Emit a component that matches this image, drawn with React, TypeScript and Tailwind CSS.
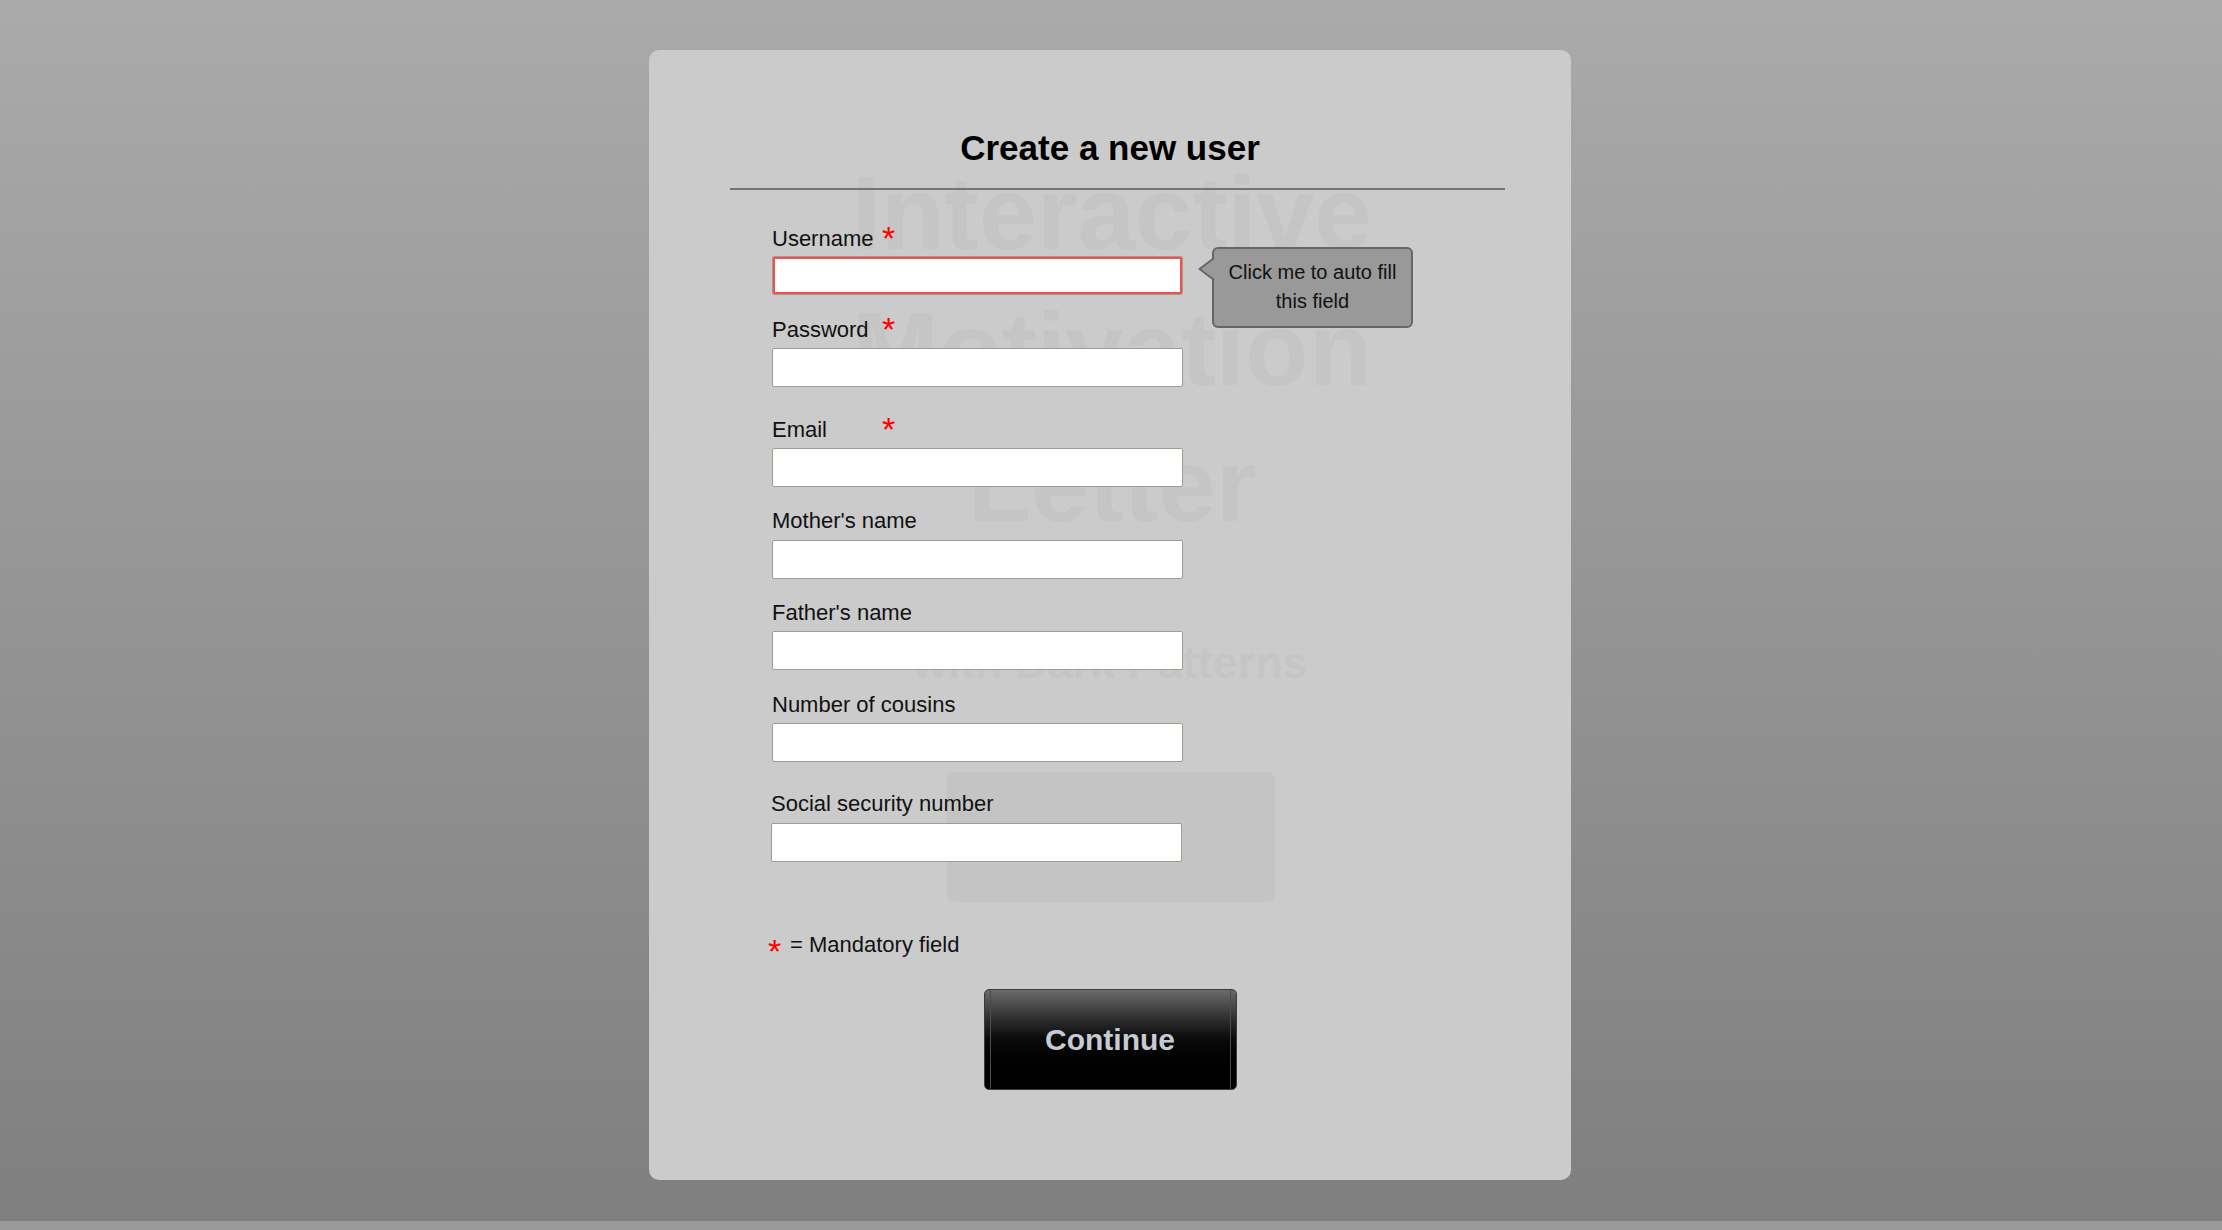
import React from "react";

type Field = {
  label: string;
  required?: boolean;
  fieldMt: string;
  inputMt: string;
  focused?: boolean;
  shift?: string;
};

const fields: Field[] = [
  { label: "Username", required: true, fieldMt: "mt-[36px]", inputMt: "mt-[4px]", focused: true },
  { label: "Password", required: true, fieldMt: "mt-[22px]", inputMt: "mt-[5px]" },
  { label: "Email", required: true, fieldMt: "mt-[30px]", inputMt: "mt-[5px]" },
  { label: "Mother's name", fieldMt: "mt-[21px]", inputMt: "mt-[6px]" },
  { label: "Father's name", fieldMt: "mt-[21px]", inputMt: "mt-[5px]" },
  { label: "Number of cousins", fieldMt: "mt-[22px]", inputMt: "mt-[5px]" },
  { label: "Social security number", fieldMt: "mt-[29px]", inputMt: "mt-[6px]", shift: "-ml-px" },
];

function Tooltip() {
  return (
    <div className="absolute left-[563px] top-[197px] z-20 h-[81px] w-[201px] rounded-[6px] border-2 border-[#666666] bg-[#999999] pt-[9px] text-center text-[20px] leading-[29px] text-[#111111]">
      <svg
        className="absolute left-[-16px] top-[8px]"
        width="18"
        height="24"
        viewBox="0 0 18 24"
      >
        <polygon points="18,1 1,12 18,23" fill="#999999" />
        <polyline points="16,1 1.5,12 16,23" fill="none" stroke="#666666" strokeWidth="2" />
      </svg>
      Click me to auto fill
      <br />
      this field
    </div>
  );
}

function Watermark() {
  return (
    <div className="pointer-events-none absolute inset-0 z-0 select-none">
      <div className="absolute left-0 right-0 top-[95px] pl-[4px] text-center text-[104px] font-bold leading-[136px] text-[#c5c5c5]">
        Interactive
        <br />
        Motivation
        <br />
        Letter
      </div>
      <div className="absolute left-0 right-0 top-[585px] text-center text-[45px] font-bold leading-[56px] text-[#c5c5c5]">
        with Dark Patterns
      </div>
      <div className="absolute left-[298px] top-[722px] h-[130px] w-[328px] rounded-[8px] bg-[#c4c4c4]" />
    </div>
  );
}

export default function App() {
  return (
    <div
      className="min-h-[1230px] w-full bg-[#999999]"
      style={{ fontFamily: '"Liberation Sans", Arial, sans-serif' }}
    >
      <div className="h-[1221px] w-full bg-gradient-to-b from-[#aaaaaa] to-[#7f7f7f] pt-[50px]">
        <div className="relative ml-[649px] h-[1130px] w-[922px] rounded-[10px] bg-[#cbcbcb]">
          <Watermark />
          <Tooltip />
          <div className="relative z-10 flex flex-col pt-[80px]">
            <h1 className="text-center text-[35px] font-bold leading-[36px] text-black">
              Create a new user
            </h1>
            <div className="ml-[81px] mr-[66px] mt-[22px] h-[2px] bg-[#747474]" />

            <div className="ml-[123px] flex flex-col">
              {fields.map((f) => (
                <div key={f.label} className={`${f.fieldMt} ${f.shift ?? ""} flex flex-col`}>
                  <div className="flex h-[26px] items-start">
                    <span className="w-[110px] whitespace-nowrap text-[22px] leading-[26px] text-[#111111]">
                      {f.label}
                    </span>
                    {f.required && (
                      <span className="-mt-[5px] text-[34px] leading-[34px] text-[#ff0000]">*</span>
                    )}
                  </div>
                  <input
                    type="text"
                    className={`${f.inputMt} h-[39px] w-[411px] rounded-[2px] border border-[#a39b8e] bg-white outline-none ${
                      f.focused ? "shadow-[inset_0_0_0_2px_#f24f4f]" : ""
                    }`}
                  />
                </div>
              ))}
            </div>

            <div className="ml-[119px] mt-[70px] flex h-[26px] items-start">
              <span className="mt-[2px] w-[22px] text-[34px] leading-[34px] text-[#ff0000]">*</span>
              <span className="text-[22px] leading-[26px] text-[#111111]">= Mandatory field</span>
            </div>

            <button
              type="button"
              className="mx-auto mt-[31px] h-[101px] w-[253px] rounded-[5px] border border-[#3c3c3c] bg-gradient-to-b from-[#6b6b6b] via-[#0a0a0a] via-50% to-black p-0"
            >
              <div className="mx-[5px] flex h-full items-center justify-center border-x border-[#4a4a4a] text-[30px] font-bold text-[#c6cbd3]">
                Continue
              </div>
            </button>
          </div>
        </div>
      </div>
    </div>
  );
}
